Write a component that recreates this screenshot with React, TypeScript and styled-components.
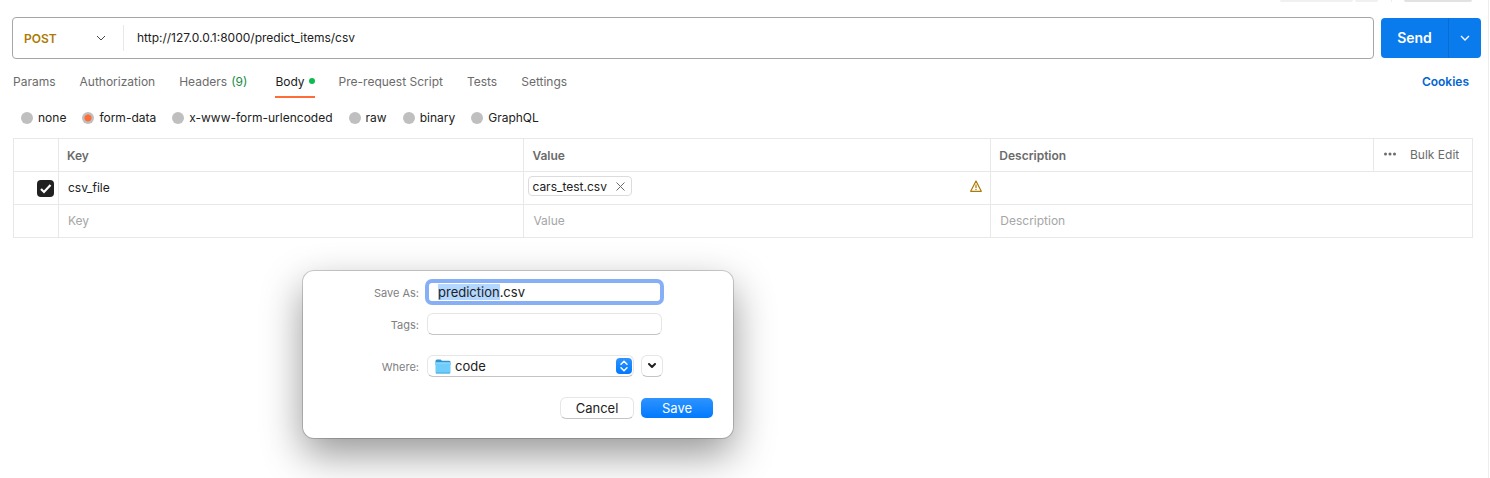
import React, { useEffect, useRef } from "react";
import styled, { createGlobalStyle, css } from "styled-components";

const GlobalStyle = createGlobalStyle`
  *, *::before, *::after { box-sizing: border-box; }
  body { margin: 0; background: #fff; }
  body, button, input, select {
    font-family: Inter, "Liberation Sans", sans-serif;
    font-size: 12px;
    color: #212121;
  }
  button { padding: 0; border: 0; background: none; cursor: pointer; }
`;

const line = "#e8e8e8";
const muted = "#6b6b6b";

const Page = styled.main`
  min-height: 100vh;
  margin-right: 1px;
  border-right: 1px solid #ededed;
  overflow: hidden;
`;

const TopStrip = styled.div`
  display: flex;
  justify-content: flex-end;
  gap: 2px;
  height: 2px;
  padding-right: 16px;
`;

const StripItem = styled.div<{ $width: number; $dark?: boolean }>`
  width: ${(p) => p.$width}px;
  border-radius: 0 0 3px 3px;
  background: ${(p) => (p.$dark ? "#e2e2e2" : "#f0f0f0")};
`;

const StripDivider = styled.div`
  width: 1px;
  margin: 0 10px 0 11px;
  background: #ededed;
`;

const RequestBar = styled.form`
  display: flex;
  align-items: center;
  gap: 7px;
  padding: 15px 7px 0 12px;
`;

const UrlBox = styled.div`
  flex: 1;
  display: flex;
  align-items: center;
  height: 42px;
  border: 1px solid #a6a6a6;
  border-radius: 4px;
`;

const MethodBox = styled.div`
  position: relative;
  width: 111px;
  height: 26px;
  border-right: 1px solid ${line};
`;

const MethodSelect = styled.select`
  appearance: none;
  width: 100%;
  height: 100%;
  padding: 0 0 0 11px;
  border: 0;
  background: none;
  color: #ad7a03;
  font-weight: 600;
`;

const MethodChevron = styled.svg`
  position: absolute;
  right: 17px;
  top: 8px;
  pointer-events: none;
`;

const UrlInput = styled.input`
  flex: 1;
  height: 40px;
  padding: 0 13px 2px;
  border: 0;
  outline: 0;
  background: none;
`;

const SendGroup = styled.div`
  display: flex;
  height: 40px;
  border-radius: 4px;
  overflow: hidden;
  background: #097bed;
`;

const SendButton = styled.button`
  width: 67px;
  padding-bottom: 2px;
  color: #fff;
  font-size: 14px;
  font-weight: 600;
`;

const SendMore = styled.button`
  display: grid;
  place-items: center;
  width: 33px;
  border-left: 1px solid #0a6bd0;
`;

const TabRow = styled.nav`
  display: flex;
  align-items: flex-start;
  gap: 24px;
  height: 39px;
  padding: 7px 19px 0 13px;
`;

const Tab = styled.button<{ $active?: boolean }>`
  display: flex;
  align-items: center;
  gap: 4px;
  height: 32px;
  color: ${(p) => (p.$active ? "#212121" : muted)};
  border-bottom: 2px solid ${(p) => (p.$active ? "#ff6c37" : "transparent")};
`;

const Count = styled.span`
  padding-right: 4px;
  color: #178c43;
`;

const Dot = styled.span`
  width: 6px;
  height: 6px;
  border-radius: 50%;
  background: #0cbb52;
`;

const CookiesLink = styled.a`
  margin-left: auto;
  line-height: 32px;
  color: #0265d2;
  font-weight: 600;
  text-decoration: none;
`;

const ModeRow = styled.div`
  display: flex;
  align-items: center;
  gap: 16px;
  height: 40px;
  padding: 0 0 1px 21px;
`;

const ModeLabel = styled.label`
  display: flex;
  align-items: center;
  gap: 5px;
`;

const Radio = styled.input`
  appearance: none;
  width: 12px;
  height: 12px;
  margin: 0;
  border-radius: 50%;
  background: #bfbfbf;
  &:checked {
    background: radial-gradient(circle, #ff6c37 0 3px, #bfbfbf 4px);
  }
`;

const TableWrap = styled.div`
  padding: 0 15px 0 13px;
`;

const Table = styled.table`
  width: 100%;
  table-layout: fixed;
  border-collapse: collapse;
  th, td {
    height: 33px;
    padding: 0;
    border: 1px solid ${line};
    text-align: left;
  }
  th {
    padding-left: 8px;
    color: ${muted};
    font-weight: 600;
  }
`;

const KeyColumn = styled.col`
  width: 31.9%;
`;

const ValueColumn = styled.col`
  width: 32%;
`;

const CheckColumn = styled.col`
  width: 45px;
`;

const ActionColumn = styled.col`
  width: 99px;
`;

const BulkActions = styled.div`
  display: flex;
  align-items: center;
  gap: 14px;
  padding: 0 0 2px 2px;
`;

const BulkButton = styled.button`
  display: flex;
  align-items: center;
  color: ${muted};
`;

const CellInput = styled.input`
  display: block;
  width: 100%;
  height: 30px;
  padding: 0 9px 2px;
  border: 0;
  outline: 0;
  background: none;
  &::placeholder { color: #a6a6a6; opacity: 1; }
`;

const Checkbox = styled.input`
  appearance: none;
  display: block;
  width: 17px;
  height: 17px;
  margin: 0 4px 0 auto;
  border-radius: 4px;
  background: #212121
    url("data:image/svg+xml,%3Csvg xmlns='http://www.w3.org/2000/svg' viewBox='0 0 17 17'%3E%3Cpath d='M4 9l3 3 6.500-7' fill='none' stroke='white' stroke-width='2.200'/%3E%3C/svg%3E")
    center / 17px 17px;
`;

const FileCell = styled.div`
  display: flex;
  align-items: center;
  justify-content: space-between;
  padding: 0 8px 4px 4px;
`;

const FileChip = styled.span`
  display: flex;
  align-items: center;
  gap: 9px;
  height: 20px;
  padding: 0 6px 0 3px;
  border: 1px solid #dcdcdc;
  border-radius: 4px;
`;

const IconButton = styled.button`
  display: flex;
`;

const Dialog = styled.form`
  display: grid;
  grid-template-columns: 116px 235px;
  column-gap: 8px;
  row-gap: 10px;
  align-items: center;
  width: 430px;
  margin: 33px 0 40px 303px;
  padding: 10px 20px 19px 0;
  border-radius: 11px;
  background: #fff;
  box-shadow: 0 0 0 1px rgba(0, 0, 0, 0.18), 0 16px 40px rgba(0, 0, 0, 0.42);
`;

const FieldLabel = styled.label`
  padding-top: 2px;
  font-size: 11px;
  text-align: right;
  color: #808080;
`;

const raised = css`
  border: 1px solid #e6e6e6;
  border-bottom-color: #c4c4c4;
  border-radius: 6px;
  background: #fff;
`;

const NameInput = styled.input`
  width: 100%;
  height: 22px;
  padding: 0 9px;
  border: 2px solid #86aff5;
  border-radius: 5px;
  outline: 0;
  box-shadow: 0 0 0 2px #86aff5;
  font-size: 13px;
  &::selection { background: #b3d7ff; color: #212121; }
`;

const TagsInput = styled.input`
  ${raised}
  width: 100%;
  height: 22px;
  padding: 0 9px;
`;

const WhereRow = styled.div`
  display: flex;
  gap: 7px;
  width: 236px;
`;

const WhereBox = styled.div`
  position: relative;
  flex: 1;
`;

const WhereSelect = styled.select`
  ${raised}
  appearance: none;
  display: block;
  width: 100%;
  height: 22px;
  padding: 0 27px 1px;
  font-size: 13px;
`;

const FolderIcon = styled.svg`
  position: absolute;
  left: 8px;
  top: 4px;
  pointer-events: none;
`;

const Stepper = styled.svg`
  position: absolute;
  right: 2px;
  top: 3px;
  pointer-events: none;
`;

const ExpandButton = styled.button`
  ${raised}
  display: grid;
  place-items: center;
  width: 22px;
  height: 22px;
`;

const Spaced = styled.div`
  display: contents;
  & > * { margin-top: 10px; }
`;

const Actions = styled.div`
  grid-column: 1 / -1;
  display: flex;
  justify-content: flex-end;
  align-items: center;
  gap: 7px;
  width: 410px;
`;

const CancelButton = styled.button`
  ${raised}
  width: 74px;
  height: 22px;
  padding-bottom: 1px;
  font-size: 13px;
`;

const SaveButton = styled.button`
  width: 72px;
  height: 20px;
  padding-bottom: 1px;
  border-radius: 5px;
  background: linear-gradient(#2e93ff, #007aff);
  color: #fff;
  font-size: 13px;
`;

const tabs = ["Params", "Authorization", "Headers", "Body", "Pre-request Script", "Tests", "Settings"];
const modes = ["none", "form-data", "x-www-form-urlencoded", "raw", "binary", "GraphQL"];

export default function App() {
  const nameRef = useRef<HTMLInputElement>(null);

  useEffect(() => {
    nameRef.current?.focus();
    nameRef.current?.setSelectionRange(0, "prediction".length);
  }, []);

  return (
    <>
      <GlobalStyle />
      <Page>
        <TopStrip>
          <StripItem $width={73} />
          <StripItem $width={23} />
          <StripDivider />
          <StripItem $width={68} $dark />
        </TopStrip>

        <RequestBar onSubmit={(e) => e.preventDefault()}>
          <UrlBox>
            <MethodBox>
              <MethodSelect aria-label="Method" defaultValue="POST">
                <option>GET</option>
                <option>POST</option>
              </MethodSelect>
              <MethodChevron width="10" height="10" viewBox="0 0 10 10" fill="none" stroke="#4a4a4a">
                <path d="M1 3l4 4 4-4" />
              </MethodChevron>
            </MethodBox>
            <UrlInput aria-label="Request URL" defaultValue="http://127.0.0.1:8000/predict_items/csv" />
          </UrlBox>
          <SendGroup>
            <SendButton type="submit">Send</SendButton>
            <SendMore type="button" aria-label="Send options">
              <svg width="10" height="10" viewBox="0 0 10 10" fill="none" stroke="#fff" strokeWidth="1.300">
                <path d="M1 3l4 4 4-4" />
              </svg>
            </SendMore>
          </SendGroup>
        </RequestBar>

        <TabRow>
          {tabs.map((name) => (
            <Tab key={name} type="button" $active={name === "Body"}>
              {name}
              {name === "Headers" && <Count>(9)</Count>}
              {name === "Body" && <Dot />}
            </Tab>
          ))}
          <CookiesLink href="#cookies">Cookies</CookiesLink>
        </TabRow>

        <ModeRow role="radiogroup" aria-label="Body type">
          {modes.map((mode) => (
            <ModeLabel key={mode}>
              <Radio type="radio" name="mode" value={mode} defaultChecked={mode === "form-data"} />
              {mode}
            </ModeLabel>
          ))}
        </ModeRow>

        <TableWrap>
          <Table>
            <colgroup>
              <CheckColumn />
              <KeyColumn />
              <ValueColumn />
              <col />
              <ActionColumn />
            </colgroup>
            <thead>
              <tr>
                <th aria-label="Enabled" />
                <th>Key</th>
                <th>Value</th>
                <th>Description</th>
                <th>
                  <BulkActions>
                    <BulkButton type="button" aria-label="More">
                      <svg width="12" height="4" viewBox="0 0 12 4" fill="#6b6b6b">
                        <circle cx="1.500" cy="2" r="1.500" />
                        <circle cx="6" cy="2" r="1.500" />
                        <circle cx="10.500" cy="2" r="1.500" />
                      </svg>
                    </BulkButton>
                    <BulkButton type="button">Bulk Edit</BulkButton>
                  </BulkActions>
                </th>
              </tr>
            </thead>
            <tbody>
              <tr>
                <td>
                  <Checkbox type="checkbox" aria-label="Enable csv_file" defaultChecked />
                </td>
                <td>
                  <CellInput aria-label="Key" defaultValue="csv_file" />
                </td>
                <td>
                  <FileCell>
                    <FileChip>
                      cars_test.csv
                      <IconButton type="button" aria-label="Remove file">
                        <svg width="9" height="9" viewBox="0 0 9 9" stroke="#6b6b6b">
                          <path d="M.5.5l8 8M8.500.5l-8 8" />
                        </svg>
                      </IconButton>
                    </FileChip>
                    <svg width="12" height="12" viewBox="0 0 12 12" fill="none" stroke="#ad7a03" strokeWidth="1.200">
                      <path d="M6 1L11.300 11.300H.7z" strokeLinejoin="round" />
                      <path d="M6 4.500v3.500M6 8.800v1.200" />
                    </svg>
                  </FileCell>
                </td>
                <td colSpan={2}>
                  <CellInput aria-label="Description" />
                </td>
              </tr>
              <tr>
                <td />
                <td>
                  <CellInput aria-label="New key" placeholder="Key" />
                </td>
                <td>
                  <CellInput aria-label="New value" placeholder="Value" />
                </td>
                <td colSpan={2}>
                  <CellInput aria-label="New description" placeholder="Description" />
                </td>
              </tr>
            </tbody>
          </Table>
        </TableWrap>

        <Dialog role="dialog" aria-label="Save file" onSubmit={(e) => e.preventDefault()}>
          <FieldLabel htmlFor="save-name">Save As:</FieldLabel>
          <NameInput id="save-name" ref={nameRef} defaultValue="prediction.csv" />
          <FieldLabel htmlFor="save-tags">Tags:</FieldLabel>
          <TagsInput id="save-tags" />
          <Spaced>
            <FieldLabel htmlFor="save-where">Where:</FieldLabel>
            <WhereRow>
              <WhereBox>
                <WhereSelect id="save-where">
                  <option>code</option>
                </WhereSelect>
                <FolderIcon width="16" height="15" viewBox="0 0 16 15">
                  <path d="M.5 2Q.5.500 2 .5h3.500l1.500 1.300h7q1.500 0 1.500 1.200v3H.5z" fill="#2f94cf" />
                  <rect x=".5" y="3.500" width="15" height="11" rx="1" fill="#6fcdfb" />
                  <path d="M.5 4h15" stroke="#9bdffd" />
                  <path d="M1 14h14" stroke="#4aa9dc" />
                </FolderIcon>
                <Stepper width="16" height="16" viewBox="0 0 16 16" fill="none">
                  <defs>
                    <linearGradient id="stepper" x2="0" y2="1">
                      <stop stopColor="#2e93ff" />
                      <stop offset="1" stopColor="#007aff" />
                    </linearGradient>
                  </defs>
                  <rect width="16" height="16" rx="4" fill="url(#stepper)" />
                  <path
                    d="M5 6.200l3-3 3 3M5 9.800l3 3 3-3"
                    stroke="#fff"
                    strokeWidth="1.500"
                    strokeLinecap="round"
                    strokeLinejoin="round"
                  />
                </Stepper>
              </WhereBox>
              <ExpandButton type="button" aria-label="Show more">
                <svg width="8" height="6" viewBox="0 0 8 6" fill="none" stroke="#212121" strokeWidth="2">
                  <path d="M1 1l3 3 3-3" strokeLinecap="round" strokeLinejoin="round" />
                </svg>
              </ExpandButton>
            </WhereRow>
            <Actions>
              <CancelButton type="button">Cancel</CancelButton>
              <SaveButton type="submit">Save</SaveButton>
            </Actions>
          </Spaced>
        </Dialog>
      </Page>
    </>
  );
}
